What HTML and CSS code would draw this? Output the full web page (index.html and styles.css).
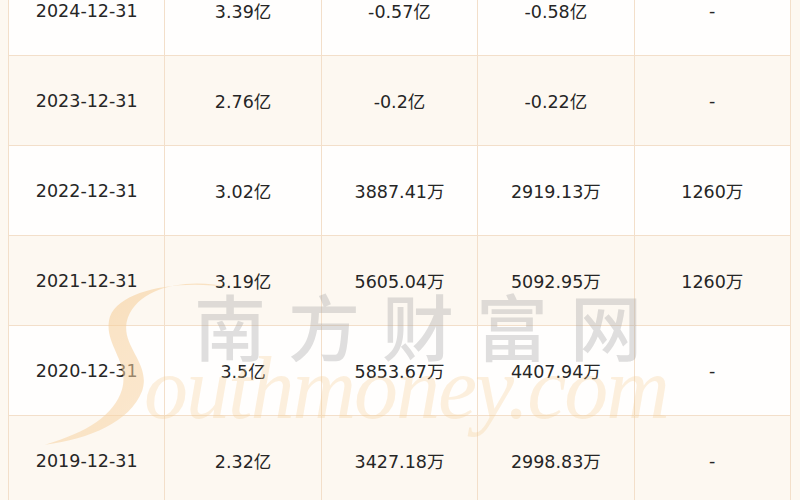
FILE: index.html
```html
<!DOCTYPE html>
<html lang="zh-CN">
<head>
<meta charset="utf-8">
<title>财务数据</title>
<link rel="stylesheet" href="styles.css">
</head>
<body>
<div class="frame">
  <table class="data">
    <tbody>
      <tr class="row-white"><td>2024-12-31</td><td>3.39亿</td><td>-0.57亿</td><td>-0.58亿</td><td>-</td></tr>
      <tr class="row-cream"><td>2023-12-31</td><td>2.76亿</td><td>-0.2亿</td><td>-0.22亿</td><td>-</td></tr>
      <tr class="row-white"><td>2022-12-31</td><td>3.02亿</td><td>3887.41万</td><td>2919.13万</td><td>1260万</td></tr>
      <tr class="row-cream"><td>2021-12-31</td><td>3.19亿</td><td>5605.04万</td><td>5092.95万</td><td>1260万</td></tr>
      <tr class="row-white"><td>2020-12-31</td><td>3.5亿</td><td>5853.67万</td><td>4407.94万</td><td>-</td></tr>
      <tr class="row-cream"><td>2019-12-31</td><td>2.32亿</td><td>3427.18万</td><td>2998.83万</td><td>-</td></tr>
    </tbody>
  </table>
  <div class="watermark" aria-hidden="true">
    <svg class="wm-s" width="200" height="170" viewBox="0 0 200 200" preserveAspectRatio="none">
      <defs>
        <linearGradient id="sg" x1="0" y1="0" x2="1" y2="1">
          <stop offset="0" stop-color="#f6c98e"/>
          <stop offset="1" stop-color="#f9dcb4"/>
        </linearGradient>
      </defs>
      <path d="M200 10 C160 -2 110 8 98 45 C88 78 122 98 112 132 C100 168 60 188 15 195 C58 180 84 160 92 130 C100 96 72 76 80 44 C90 14 145 0 200 10 Z" fill="url(#sg)"/>
    </svg>
    <div class="wm-cn">南方财富网</div>
    <div class="wm-en">outhmoney.com</div>
  </div>
</div>
</body>
</html>
```

FILE: styles.css
```css
html, body {
  margin: 0;
  padding: 0;
  background: #fdf8f1;
  overflow: hidden;
}
body {
  padding: 0 8px;
  font-family: "DejaVu Sans", "Noto Sans CJK SC", sans-serif;
  color: #262626;
}
.frame {
  position: relative;
  width: 783px;
  margin-top: -35px;
}
.data {
  width: 783px;
  border-collapse: collapse;
  table-layout: fixed;
}
.data td {
  height: 89px;
  border: 1px solid #f3dfca;
  text-align: center;
  vertical-align: middle;
  font-size: 17.5px;
  padding: 0;
}
.row-white td { background: #fffefd; }
.row-cream td { background: #fdf8f1; }

.watermark {
  position: absolute;
  left: 0;
  top: 0;
  width: 100%;
  height: 100%;
  pointer-events: none;
}
.wm-s {
  position: absolute;
  left: 22px;
  top: 314px;
  opacity: 0.55;
}
.wm-cn {
  position: absolute;
  left: 186px;
  top: 323px;
  font-family: "Noto Sans CJK SC", sans-serif;
  font-weight: 500;
  font-size: 72px;
  letter-spacing: 22px;
  line-height: 1;
  color: rgba(165, 165, 165, 0.36);
}
.wm-en {
  position: absolute;
  left: 136px;
  top: 380px;
  font-family: "Liberation Serif", serif;
  font-style: italic;
  font-size: 88px;
  line-height: 1;
  letter-spacing: -2px;
  color: rgba(245, 200, 140, 0.28);
}
```
